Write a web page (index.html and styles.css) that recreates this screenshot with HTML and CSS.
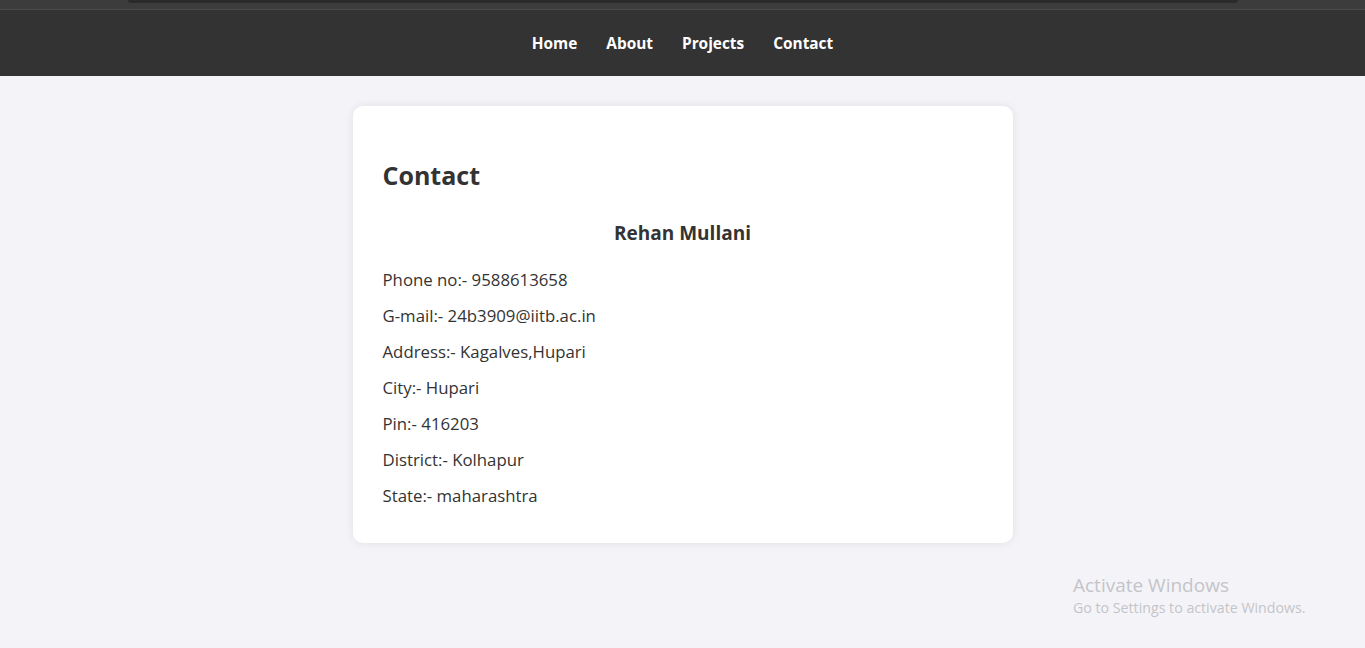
FILE: index.html
```html
<!DOCTYPE html>
<html lang="en">
<head>
<meta charset="utf-8">
<title>Contact</title>
<link rel="stylesheet" href="styles.css">
</head>
<body>
<div class="topstrip"><div class="topbar"></div></div>
<header class="nav">
  <a href="#">Home</a>
  <a href="#">About</a>
  <a href="#">Projects</a>
  <a href="#">Contact</a>
</header>
<main class="page">
  <section class="card">
    <h2 class="title">Contact</h2>
    <h3 class="name">Rehan Mullani</h3>
    <p>Phone no:- 9588613658</p>
    <p>G-mail:- 24b3909@iitb.ac.in</p>
    <p>Address:- Kagalves,Hupari</p>
    <p>City:- Hupari</p>
    <p>Pin:- 416203</p>
    <p>District:- Kolhapur</p>
    <p>State:- maharashtra</p>
  </section>
</main>
<div class="watermark">
  <div class="wm-title">Activate Windows</div>
  <div class="wm-sub">Go to Settings to activate Windows.</div>
</div>
</body>
</html>
```
FILE: styles.css
```css
* { box-sizing: border-box; }
html, body { margin: 0; padding: 0; }
body {
  background: #f4f4f8;
  font-family: "Open Sans", "Noto Sans", sans-serif;
  color: #333;
  height: 648px;
  overflow: hidden;
}
.topstrip {
  height: 10px;
  background: #3c3c3c;
  border-bottom: 1px solid #4a4a4a;
  padding: 0 127px 0 128px;
}
.topbar {
  height: 3px;
  background: #2a2a2a;
  border-radius: 0 0 6px 6px;
}
.nav {
  height: 66px;
  background: #333;
  display: flex;
  justify-content: center;
  align-items: center;
  gap: 29px;
}
.nav a {
  color: #fff;
  text-decoration: none;
  font-weight: 700;
  font-size: 15.4px;
}
.page {
  display: flex;
  justify-content: center;
  padding-top: 30px;
}
.card {
  width: 660px;
  background: #fff;
  border-radius: 10px;
  box-shadow: 0 0 10px rgba(0,0,0,0.08);
  padding: 41px 30px 29px;
}
.title {
  margin: 0;
  font-size: 25px;
  line-height: 56px;
}
.name {
  text-align: center;
  font-size: 19px;
  margin: 15px 0 14px;
  line-height: 30px;
}
.card p {
  margin: 0;
  font-size: 16.8px;
  line-height: 36px;
}
.watermark {
  position: absolute;
  left: 1073px;
  top: 572px;
  color: #c4c4c8;
}
.wm-title { font-size: 19px; line-height: 26px; }
.wm-sub { font-size: 14.2px; line-height: 20px; }
```
